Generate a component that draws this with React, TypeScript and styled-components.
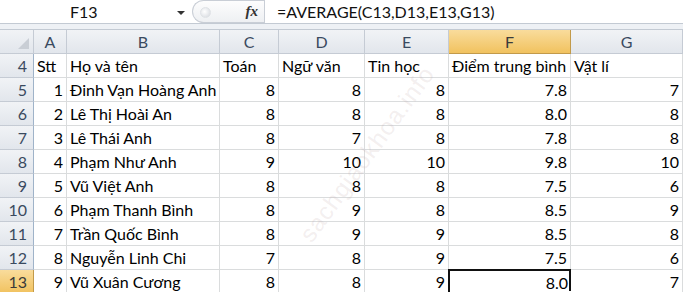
import React from "react";
import styled, { createGlobalStyle, css } from "styled-components";

const Global = createGlobalStyle`
  html, body { margin: 0; padding: 0; background: #fff; overflow: hidden; }
  body { font-family: Lato, "Open Sans", sans-serif; }
`;

const Page = styled.div`
  width: 683px;
  height: 292px;
  position: relative;
  overflow: hidden;
  background: #fff;
`;

const FormulaBar = styled.div`
  display: flex;
  align-items: center;
  height: 23px;
  border-bottom: 1px solid #c3cad3;
  background: #fff;
  font-size: 16px;
  color: #111;
`;

const NameBox = styled.div`
  width: 170px;
  padding-left: 70px;
  box-sizing: border-box;
`;

const DropArrow = styled.div`
  width: 0;
  height: 0;
  border-left: 4px solid transparent;
  border-right: 4px solid transparent;
  border-top: 4px solid #333;
  margin: 2px 4px 0 7px;
`;

const Knob = styled.div`
  width: 72px;
  height: 23px;
  box-sizing: border-box;
  margin-left: 3px;
  border: 1px solid #c9ced6;
  border-right: none;
  border-radius: 14px 0 0 14px;
  background: linear-gradient(#fdfdfd, #eef0f3);
  position: relative;
  display: flex;
  align-items: center;
  justify-content: flex-end;
  padding-right: 6px;
`;

const KnobDot = styled.span`
  position: absolute;
  left: 7px;
  top: 6px;
  width: 9px;
  height: 9px;
  border-radius: 50%;
  background: radial-gradient(circle at 40% 40%, #ffffff, #d3d7dd);
  border: 1px solid #dfe2e6;
`;

const Fx = styled.span`
  font-family: "Liberation Serif", serif;
  font-style: italic;
  font-weight: bold;
  font-size: 15px;
  color: #333;
`;

const Sep = styled.div`
  width: 1px;
  align-self: stretch;
  background: #c9ced6;
`;

const Formula = styled.div`
  padding-left: 12px;
`;

const Gap = styled.div`
  height: 5px;
  background: #eef1f5;
  border-bottom: 1px solid #c3cad3;
`;

const Grid = styled.div`
  display: grid;
  grid-template-columns: 34px 33px 153px 59px 86px 84px 122px 112px;
  grid-auto-rows: 24px;
  font-size: 16px;
`;

const HeadCell = styled.div<{ $sel?: boolean; $row?: boolean }>`
  box-sizing: border-box;
  background: linear-gradient(#f1f3f6, #e2e6ec);
  border-right: 1px solid #c5cbd4;
  border-bottom: 1px solid #c5cbd4;
  color: #3a4a60;
  display: flex;
  align-items: center;
  justify-content: center;
  ${(p) =>
    p.$row &&
    css`
      justify-content: flex-end;
      padding-right: 6px;
      border-right-color: #9fb3c9;
    `}
  ${(p) =>
    p.$sel &&
    css`
      background: linear-gradient(#f9dc9c, #f1c25f);
      border-color: #c29a4a;
      color: #3a3a3a;
    `}
`;

const Corner = styled(HeadCell)`
  position: relative;
  &::after {
    content: "";
    position: absolute;
    right: 4px;
    bottom: 4px;
    width: 0;
    height: 0;
    border-left: 11px solid transparent;
    border-bottom: 11px solid #c9ced5;
  }
`;

const Cell = styled.div<{ $num?: boolean }>`
  box-sizing: border-box;
  border-right: 1px solid #dadcdd;
  border-bottom: 1px solid #dadcdd;
  color: #000;
  display: flex;
  align-items: center;
  padding: 0 3px;
  white-space: nowrap;
  overflow: visible;
  justify-content: ${(p) => (p.$num ? "flex-end" : "flex-start")};
`;

const ActiveCell = styled(Cell)`
  position: relative;
  border: none;
  &::before {
    content: "";
    position: absolute;
    inset: -1px 0 -2px -1px;
    border: 2px solid #111;
    pointer-events: none;
  }
  &::after {
    content: "";
    position: absolute;
    right: -3px;
    bottom: -4px;
    width: 5px;
    height: 5px;
    background: #111;
    border: 1px solid #fff;
  }
`;

const Watermark = styled.div`
  position: absolute;
  left: 262px;
  top: 140px;
  transform: rotate(-54deg);
  transform-origin: center;
  font-size: 24px;
  letter-spacing: 1px;
  color: rgba(190, 160, 165, 0.18);
  pointer-events: none;
  white-space: nowrap;
  font-family: "Liberation Sans", sans-serif;
`;

const cols = ["A", "B", "C", "D", "E", "F", "G"];

const rows: [number, string, number, number, number, string, number][] = [
  [1, "Đinh Vạn Hoàng Anh", 8, 8, 8, "7.8", 7],
  [2, "Lê Thị Hoài An", 8, 8, 8, "8.0", 8],
  [3, "Lê Thái Anh", 8, 7, 8, "7.8", 8],
  [4, "Phạm Như Anh", 9, 10, 10, "9.8", 10],
  [5, "Vũ Việt Anh", 8, 8, 8, "7.5", 6],
  [6, "Phạm Thanh Bình", 8, 9, 8, "8.5", 9],
  [7, "Trần Quốc Bình", 8, 9, 9, "8.5", 8],
  [8, "Nguyễn Linh Chi", 7, 8, 9, "7.5", 6],
  [9, "Vũ Xuân Cương", 8, 8, 9, "8.0", 7],
];

export default function App() {
  return (
    <Page>
      <Global />
      <FormulaBar>
        <NameBox>F13</NameBox>
        <DropArrow />
        <Knob>
          <KnobDot />
          <Fx>fx</Fx>
        </Knob>
        <Sep />
        <Formula>=AVERAGE(C13,D13,E13,G13)</Formula>
      </FormulaBar>
      <Gap />
      <Grid>
        <Corner />
        {cols.map((c) => (
          <HeadCell key={c} $sel={c === "F"}>
            {c}
          </HeadCell>
        ))}
        <HeadCell $row>4</HeadCell>
        <Cell>Stt</Cell>
        <Cell>Họ và tên</Cell>
        <Cell>Toán</Cell>
        <Cell>Ngữ văn</Cell>
        <Cell>Tin học</Cell>
        <Cell>Điểm trung bình</Cell>
        <Cell>Vật lí</Cell>
        {rows.map((r, i) => {
          const rowNo = i + 5;
          const active = rowNo === 13;
          return (
            <React.Fragment key={rowNo}>
              <HeadCell $row $sel={active}>
                {rowNo}
              </HeadCell>
              <Cell $num>{r[0]}</Cell>
              <Cell>{r[1]}</Cell>
              <Cell $num>{r[2]}</Cell>
              <Cell $num>{r[3]}</Cell>
              <Cell $num>{r[4]}</Cell>
              {active ? <ActiveCell $num>{r[5]}</ActiveCell> : <Cell $num>{r[5]}</Cell>}
              <Cell $num>{r[6]}</Cell>
            </React.Fragment>
          );
        })}
      </Grid>
      <Watermark>sachgiaokhoa.info</Watermark>
    </Page>
  );
}
